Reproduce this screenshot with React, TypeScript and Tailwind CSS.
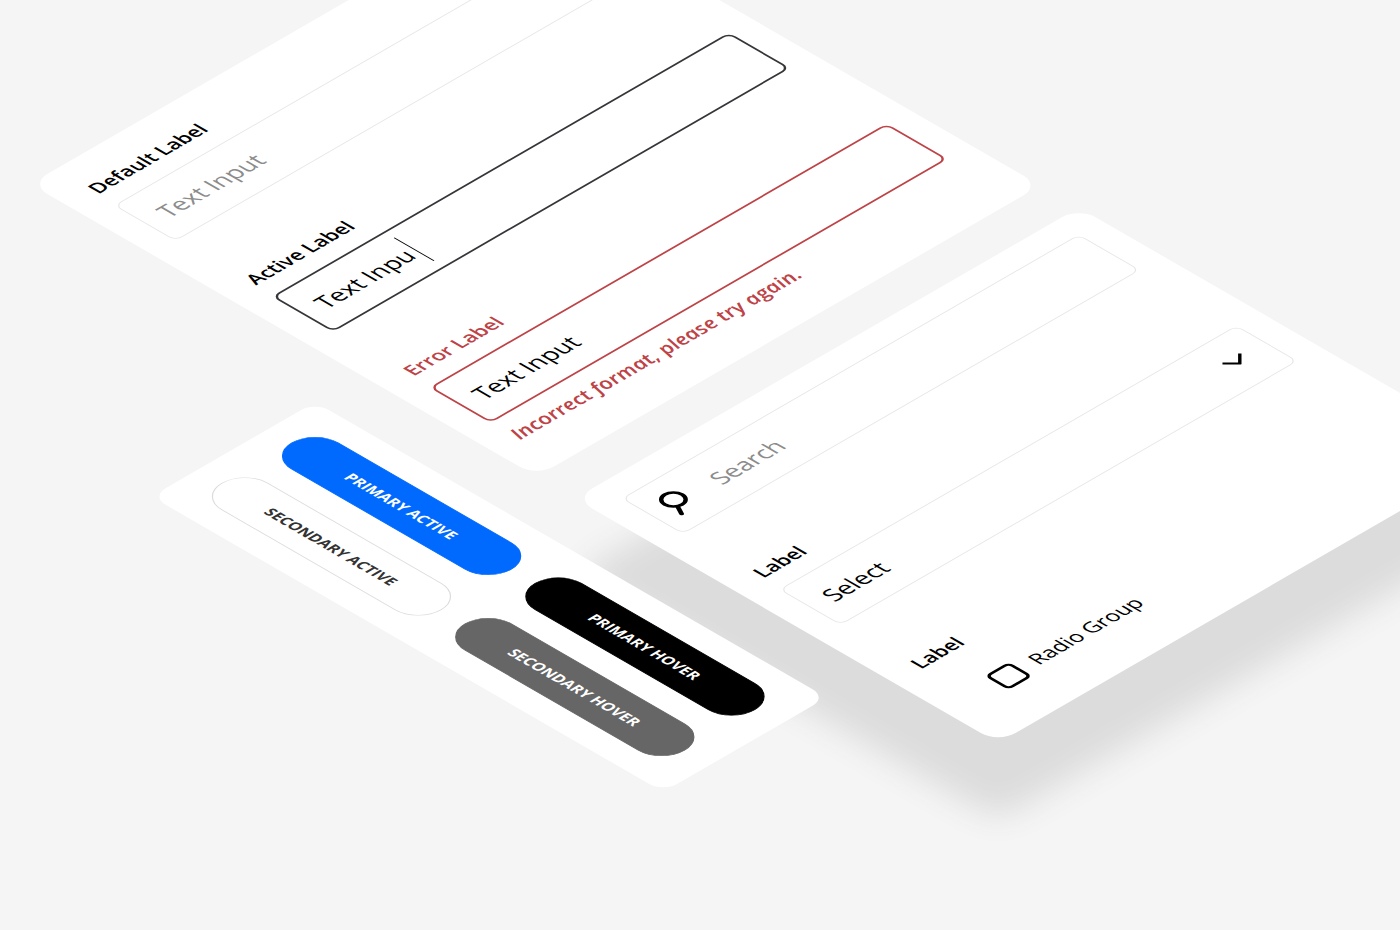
import { InputHTMLAttributes } from 'react';

interface TextFieldProps extends InputHTMLAttributes<HTMLInputElement> {
  id: string;
  label: string;
  state?: 'default' | 'active' | 'error';
  message?: string;
}

const borders = {
  default: 'border border-[#e6e6e6] px-[18px]',
  active: 'border-2 border-[#36363a] px-[17px]',
  error: 'border-2 border-[#be4347] px-[17px]',
};

const fieldBase = 'block h-[71px] w-full rounded-lg bg-white text-2xl outline-none placeholder:text-[#8c8c8c] placeholder:opacity-100';
const labelBase = 'mb-[13px] block pl-0.5 text-xl leading-7 font-semibold';

const TextField = ({ id, label, state = 'default', message, ...rest }: TextFieldProps) => {
  const isError = state === 'error';

  return (
    <div>
      <label htmlFor={id} className={`${labelBase} ${isError ? 'text-[#be4347]' : 'text-black'}`}>
        {label}
      </label>
      <div className="relative">
        <input id={id} type="text" className={`${fieldBase} ${borders[state]}`} {...rest} />
        {state === 'active' && <span className="absolute top-3 left-[129px] h-[46px] w-px bg-black" />}
      </div>
      {message && <p className="mt-3 text-[21px] leading-7 font-semibold text-[#be4347] italic">{message}</p>}
    </div>
  );
};

const SearchField = () => (
  <div className="relative">
    <input type="search" aria-label="Search" placeholder="Search" className={`${fieldBase} border border-[#e6e6e6] pr-[18px] pl-[70px]`} />
    <svg className="pointer-events-none absolute top-[18px] left-4 h-9 w-[26px]" viewBox="0 0 26 36" fill="none" stroke="black">
      <circle cx="13" cy="13" r="10" strokeWidth="3.6" />
      <path d="M8.4 22.5 3.4 32" strokeWidth="4" strokeLinecap="round" />
    </svg>
  </div>
);

const SelectField = () => (
  <div>
    <label htmlFor="select" className={`${labelBase} text-black`}>
      Label
    </label>
    <div className="relative">
      <select id="select" className={`${fieldBase} appearance-none ${borders.default}`}>
        <option>Select</option>
      </select>
      <svg className="pointer-events-none absolute top-7 right-6 h-3.5 w-6" viewBox="0 0 24 14" fill="none" stroke="black" strokeWidth="2.8">
        <path d="M2 2 12 12 22 2" />
      </svg>
    </div>
  </div>
);

const buttons = [
  { label: 'PRIMARY ACTIVE', style: 'border-[#006aff] bg-[#006aff] text-white' },
  { label: 'PRIMARY HOVER', style: 'border-black bg-black text-white' },
  { label: 'SECONDARY ACTIVE', style: 'border-[#dcdcdc] bg-white text-[#333333]' },
  { label: 'SECONDARY HOVER', style: 'border-[#666666] bg-[#666666] text-white' },
];

export default function App() {
  return (
    <main className="relative h-screen overflow-hidden bg-[#f5f5f5] font-['Open_Sans',sans-serif]">
      {/* Form panels, x axis rising to the right */}
      <div className="absolute top-[184px] left-[30px] flex w-[582px] origin-top-left flex-col gap-11 [transform:matrix(0.866,-0.5,0.866,0.5,0,0)]">
        <section className="flex flex-col gap-[70px] rounded-[20px] bg-white px-[27px] pt-[29px] pb-10">
          <TextField id="default" label="Default Label" placeholder="Text Input" />
          <TextField id="active" label="Active Label" state="active" defaultValue="Text Inpu" />
          <TextField id="error" label="Error Label" state="error" defaultValue="Text Input" message="Incorrect format, please try again." />
        </section>

        <section className="flex flex-col gap-[70px] rounded-[20px] bg-white px-[27px] pt-[27px] pb-[47px] shadow-[-77px_77px_32px_#dcdcdc]">
          <SearchField />
          <SelectField />
          <fieldset>
            <legend className="pl-0.5 text-xl leading-7 font-semibold text-black">Label</legend>
            <label className="mt-9 ml-8 flex h-7 items-center gap-3.5 text-[21px] text-black">
              <input type="checkbox" className="size-7 appearance-none rounded-md border-[3px] border-black bg-white" />
              Radio Group
            </label>
          </fieldset>
        </section>
      </div>

      {/* Button panel, x axis falling to the right */}
      <section className="absolute top-[402px] left-[315px] grid w-[591px] origin-top-left grid-cols-2 gap-[27px] rounded-2xl bg-white py-[27px] pr-[29px] pl-[27px] [transform:matrix(0.866,0.5,-0.866,0.5,0,0)]">
        {buttons.map((button) => (
          <button key={button.label} type="button" className={`h-[54px] rounded-full border text-[15px] font-bold ${button.style}`}>
            {button.label}
          </button>
        ))}
      </section>
    </main>
  );
}
